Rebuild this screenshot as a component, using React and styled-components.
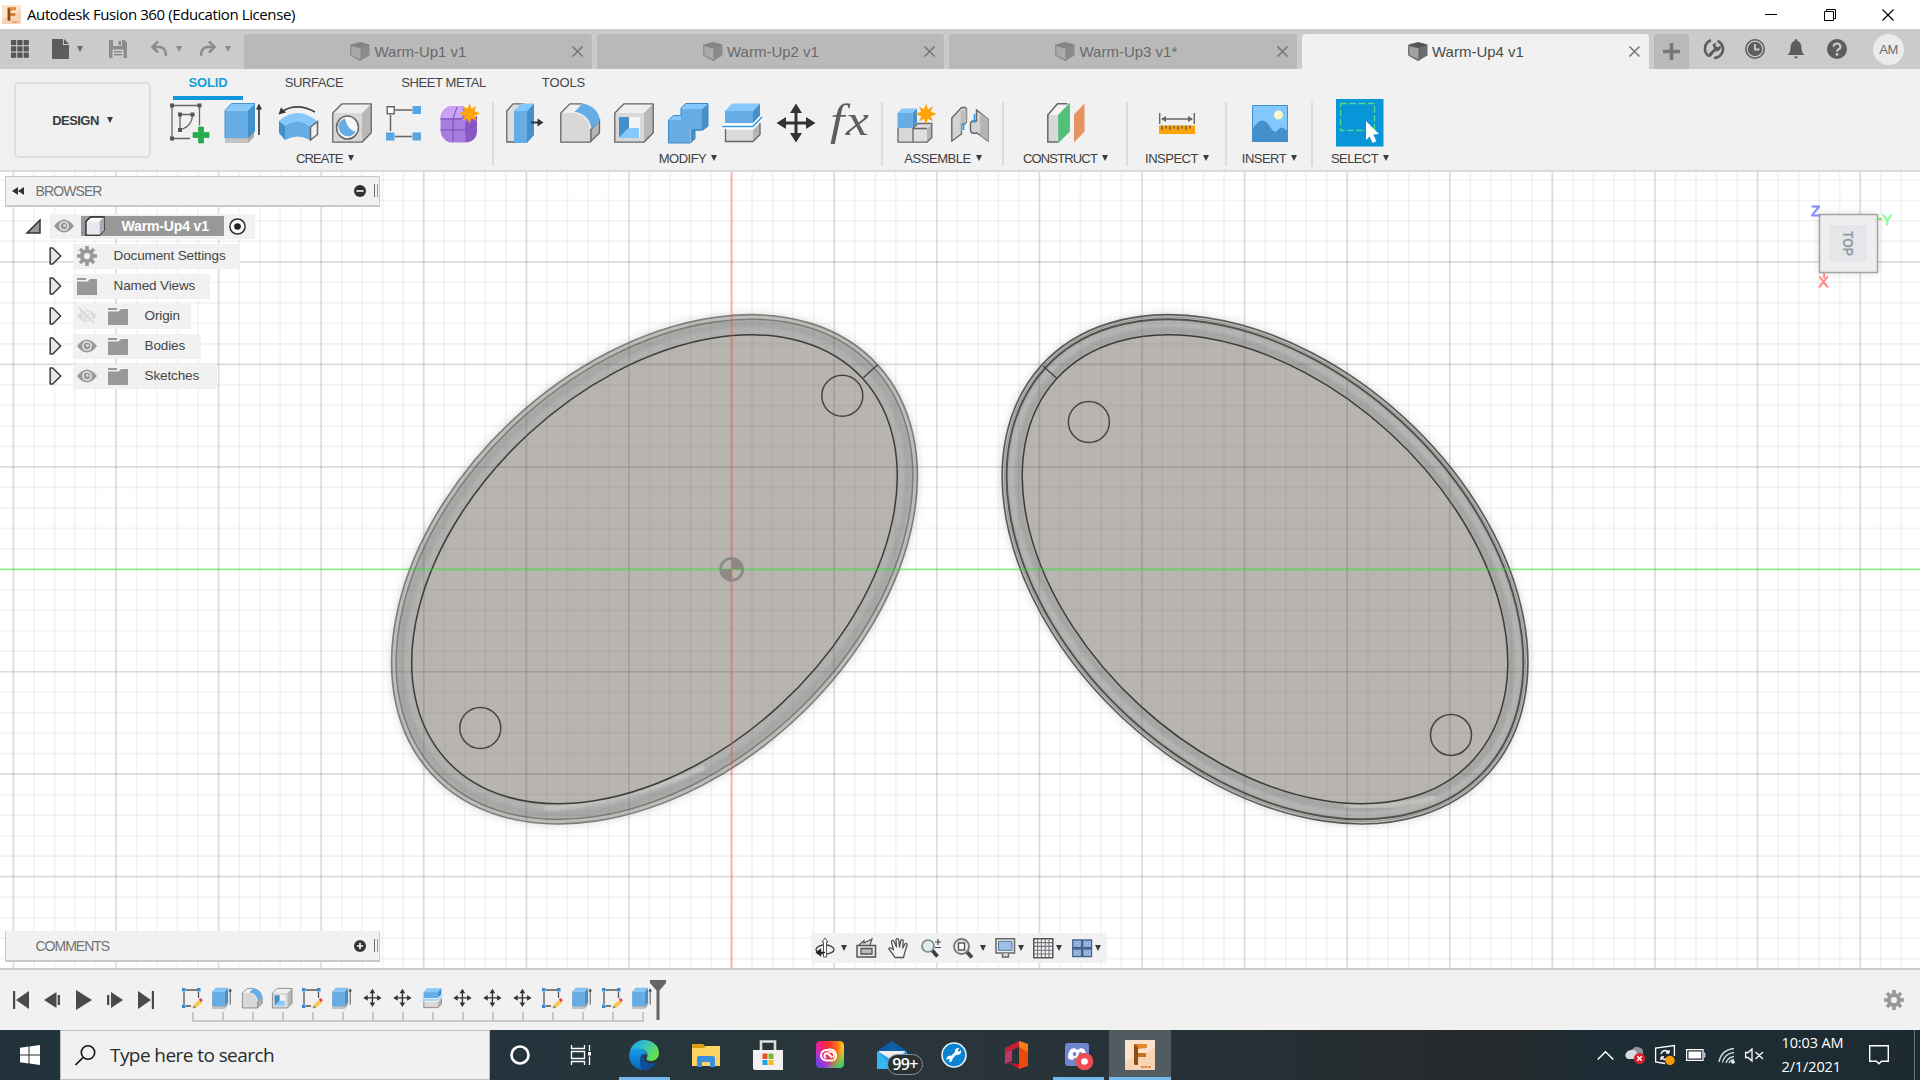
import React from 'react';
import styled, { createGlobalStyle } from 'styled-components';

const Global = createGlobalStyle`
  * { box-sizing: border-box; }
  html, body { margin: 0; padding: 0; overflow: hidden; }
  body { font-family: "Liberation Sans", Arial, sans-serif; color: #3c3c3c; }
  svg { display: block; flex: none; overflow: visible; }
`;

const SEGOE = '"Open Sans", "Noto Sans", sans-serif';

const Window = styled.div`
  width: 1920px; height: 1080px; display: flex; flex-direction: column; overflow: hidden; background: #fff;
`;
const Caret = styled.i`
  width: 0; height: 0; flex: none;
  border-left: 3.5px solid transparent; border-right: 3.5px solid transparent;
  border-top: 6px solid ${p => p.$color || '#3c3c3c'};
  margin-left: ${p => p.$gap || 0}px;
`;

/* ---------- title bar ---------- */
const TitleBar = styled.header`
  height: 29px; flex: none; display: flex; align-items: center; padding: 0 26px 0 2px; background: #fff;
`;
const TitleText = styled.span`
  font: 15px ${SEGOE}; letter-spacing: -0.4px; color: #000; margin: 0 0 2px 6px; flex: 1; white-space: nowrap;
`;
const WindowButtons = styled.div`display: flex; gap: 46.5px; align-items: center;`;

/* ---------- tab strip ---------- */
const Strip = styled.nav`
  height: 40px; flex: none; display: flex; background: #cbcbcb; align-items: flex-end;
`;
const QuickTools = styled.div`
  width: 244px; height: 40px; display: flex; align-items: center; padding: 0 0 0 11px;
`;
const QuickItem = styled.div`
  display: flex; align-items: center; width: ${p => p.$w}px;
`;
const Tab = styled.div`
  width: 347.5px; height: 35px; margin-right: 5px; border-radius: 4px 4px 0 0; display: flex; align-items: center;
  padding: 0 9px 0 106px; background: ${p => (p.$active ? '#f1f1f1' : '#b9b9b9')};
  color: ${p => (p.$active ? '#4a4a4a' : '#6a6a6a')};
`;
const TabLabel = styled.span`font-size: 15px; margin-left: 4.5px; flex: 1; white-space: nowrap;`;
const AddTab = styled.div`
  width: 35px; height: 35px; background: #bababa; border-radius: 4px 4px 0 0; display: grid; place-items: center;
`;
const StripTools = styled.div`
  display: flex; height: 40px; align-items: center; padding-left: 15px; gap: 21px;
`;
const Avatar = styled.div`
  width: 31px; height: 31px; border-radius: 50%; background: #ebebeb; display: grid; place-items: center;
  font-size: 13px; letter-spacing: -0.5px; color: #6b6b6b; margin-left: 5px;
`;

/* ---------- ribbon ---------- */
const Ribbon = styled.section`
  height: 103px; flex: none; display: flex; background: #f1f1f1; border-bottom: 2px solid #dadada;
`;
const DesignButton = styled.button`
  width: 137px; height: 76px; margin: 13px 5px 0 14px; border: 2px solid #dedede; border-radius: 5px; background: #f1f1f1;
  font: bold 13px "Liberation Sans", Arial, sans-serif; letter-spacing: -0.55px; color: #3c3c3c; padding: 0;
  display: flex; align-items: center; justify-content: center;
`;
const RibbonBody = styled.div`display: flex; flex-direction: column;`;
const RibbonTabs = styled.div`display: flex; height: 31px; padding-left: 17px;`;
const RibbonTab = styled.div`
  width: ${p => p.$w}px; margin-right: ${p => p.$gap}px; text-align: center; font-size: 13px; line-height: 28px;
  letter-spacing: ${p => p.$ls}px; white-space: nowrap;
  font-weight: ${p => (p.$on ? 'bold' : 'normal')};
  color: ${p => (p.$on ? '#189cdc' : '#474747')};
  border-bottom: 4px solid ${p => (p.$on ? '#0f97d9' : 'transparent')};
`;
const Groups = styled.div`display: flex; height: 70px;`;
const Group = styled.div`
  width: ${p => p.$w}px; display: flex; flex-direction: column; align-items: center;
  background: ${p => (p.$last ? 'none' : 'linear-gradient(#dcdcdc, #dcdcdc) right 2px / 2px 64px no-repeat')};
`;
const GroupIcons = styled.div`
  height: 48px; display: flex; align-items: center; gap: 14px; margin-top: -1px;
`;
const GroupLabel = styled.div`
  display: flex; align-items: center; font-size: 13px; letter-spacing: ${p => p.$ls}px; height: 24px; color: #404040; white-space: nowrap;
`;

/* ---------- viewport ---------- */
const Viewport = styled.main`
  position: relative; height: 796px; flex: none; overflow: hidden; background: #fff;
`;
const Scene = styled.svg`position: absolute; inset: 0;`;
const Overlay = styled.div`
  position: relative; height: 100%; display: flex; flex-direction: column; justify-content: space-between;
`;
const BrowserPanel = styled.aside`width: 375px; margin: 4px 0 0 5px;`;
const PanelBar = styled.div`
  width: 375px; height: 31px; background: #f1f1f1; display: flex; align-items: center; padding: 0 1px 1px 5.5px;
  border: 1px solid #c9c9c9; border-bottom-width: 2px; ${p => p.$flat && 'border-top-color: #f1f1f1;'}
  font-size: 14px; letter-spacing: ${p => p.$ls}px; color: #717171;
`;
const PanelTitle = styled.span`flex: 1; margin-left: ${p => p.$x}px;`;
const Grip = styled.i`width: 4px; height: 13px; margin-left: 8.5px; border-left: 1px solid #6b6b6b; border-right: 1px solid #9a9a9a;`;
const Tree = styled.div`display: flex; flex-direction: column; margin-top: 6.5px; gap: 5px;`;
const TreeRow = styled.div`display: flex; height: 25px; align-items: center; padding-left: ${p => p.$x}px;`;
const TreeItem = styled.div`
  height: 25px; width: ${p => p.$w}px; background: #f1f1f1; display: flex; align-items: center; gap: 11px; padding-left: 3.5px;
  margin-left: ${p => p.$x}px;
`;
const TreeLabel = styled.span`font-size: 13.5px; letter-spacing: -0.12px; margin: 0 0 1px 6px; color: #454545; white-space: nowrap;`;
const RootName = styled.div`
  width: 143px; height: 20px; background: #989898; color: #fff; font-weight: bold; font-size: 14px; letter-spacing: -0.15px;
  display: flex; align-items: center; gap: 17px; padding-left: 4px; margin: 0 -6px 0 -4px; white-space: nowrap;
`;
const BottomRow = styled.div`display: flex; align-items: flex-start; padding-left: 5px; height: 37px;`;
const NavBar = styled.div`
  margin: 2px 0 0 431px; width: 296px; height: 30px; background: #f1f1f1; display: flex; align-items: center; padding-left: 4px;
`;
const NavItem = styled.div`display: flex; align-items: center; width: ${p => p.$w}px;`;

/* ---------- timeline ---------- */
const Timeline = styled.section`
  height: 62px; flex: none; background: #f1f1f1; border-top: 2px solid #cbcbcb; display: flex; align-items: center; padding: 0 16px 0 13px;
`;
const Playback = styled.div`display: flex; gap: 15.3px; width: 169px;`;
const Features = styled.div`display: flex; height: 60px; width: 468px; align-items: flex-start;`;
const Feature = styled.div`
  width: 30px; flex: none; padding-top: 18px; display: flex; flex-direction: column; gap: 3px;
`;
const Tick = styled.i`
  display: block; height: 10px; width: ${p => (p.$last ? 2 : 30)}px; margin-left: 10px;
  border-left: 2px solid #c8c8c8; ${p => !p.$last && 'border-bottom: 2px solid #c8c8c8;'}
`;
const Push = styled.div`flex: 1;`;

/* ---------- taskbar ---------- */
const Taskbar = styled.footer`
  height: 50px; flex: none; display: flex; background: linear-gradient(90deg, #22323b 0%, #24343c 26%, #2a363b 45%, #263238 60%, #25292c 78%, #1e2d35 83%, #1d2a32 100%);
`;
const Slot = styled.div`
  width: ${p => p.$w || 62}px; height: 50px; display: grid; place-items: center;
  background: ${p => (p.$current ? '#525b60' : 'transparent')};
  box-shadow: ${p => (p.$current ? 'inset 0 -3px #76b9ed' : 'none')};
`;
const Running = styled(Slot)`
  background: linear-gradient(#76b9ed, #76b9ed) center bottom / 51px 3px no-repeat;
`;
const Search = styled.div`
  width: 430px; height: 50px; background: #f1f1f1; border: 1px solid #b9bdbf; display: flex; align-items: center; padding-left: 14px; gap: 14px;
  font: 19px ${SEGOE}; letter-spacing: -0.57px; color: #2b2b2b;
`;
const MailBox = styled.div`position: relative; width: 30px; height: 30px;`;
const Badge = styled.span`
  position: absolute; left: 10px; top: 14px; width: 36px; height: 21px; border-radius: 11px; border: 1px solid #8b9498; background: #2a3135;
  color: #fff; font: 600 16px/18px ${SEGOE}; letter-spacing: -0.6px; text-align: center;
`;
const Tray = styled.div`display: flex; align-items: center; height: 50px; margin-left: auto;`;
const TrayItem = styled.div`width: ${p => p.$w}px; height: 50px; display: flex; align-items: center;`;
const Clock = styled.div`
  width: 87px; font: 14.5px/24px ${SEGOE}; letter-spacing: -0.12px; color: #fff; white-space: nowrap; padding-bottom: 1px;
`;
const DesktopEdge = styled.i`width: 6px; height: 50px; border-left: 1px solid #6c757a;`;

/* ---------- drawings ---------- */
const D = '#666';
const Svg = ({ w = 40, h, vb, children }) => (
  <svg width={w} height={h || w} viewBox={vb || `0 0 ${w} ${h || w}`} fill="none">{children}</svg>
);

const FusionLogo = ({ s = 30 }) => (
  <Svg w={s} vb="0 0 30 30">
    <path d="M0 0h30v30H0z" fill="#fbe3cd" /><path d="M0 22L30 8v22H0z" fill="#f5caa4" opacity=".6" />
    <path d="M9 4h13v4H13v5h8v4h-8v8H9z" fill="#c9701c" /><path d="M9 4l4 4v17l-4-1z" fill="#8e4a10" /><path d="M12 4h10v4l-9 1z" fill="#e08a2c" />
    <path d="M16 27h10" stroke="#dd8640" strokeWidth="2" strokeDasharray="2.6 .9" />
  </Svg>
);
const TabCube = ({ on }) => (
  <Svg w={20} h={19}>
    <path d="M10 0l9.5 2.5v11L10 19 .5 13.5v-11z" fill={on ? '#6b6b6b' : '#8b8b8b'} />
    <path d="M.8 3.5L11 6v12.5L.8 13.2z" fill={on ? '#a2a2a2' : '#a9a9a9'} stroke={on ? '#5e5e5e' : '#888'} strokeWidth="1" />
    <path d="M.8 3L10 .5l9.200 2.100L11 6z" fill={on ? '#555' : '#848484'} />
  </Svg>
);
const Cross = ({ s = 11, c = '#777', sw = 1.6 }) => <Svg w={s}><path d={`M.5.5l${s - 1} ${s - 1}M${s - 0.5}.5l-${s - 1} ${s - 1}`} stroke={c} strokeWidth={sw} /></Svg>;

const SolidFront = () => (
  <g strokeLinejoin="round">
    <path d="M.8 10L10 .8h29L30 10z" fill="#efefef" /><path d="M30 10L39.2.8v29L30 39.2z" fill="#b8b8b8" />
    <path d="M.8 10H30v29.2H.8z" fill="#d8d8d8" /><path d="M.8 10L10 .8h29.200v29L30 39.200H.8z" stroke={D} strokeWidth="1.3" />
  </g>
);
const BlueExtrude = () => (
  <>
    <path d="M1 34h23l6-5v5l-6 6H1z" fill="#a9a9a9" /><path d="M1 35.5h23V40H1z" fill="#c4c4c4" />
    <path d="M1 7.5h23V35H1z" fill="#65ade4" /><path d="M1 7.5L7.5.5H31l-7 7z" fill="#86c8fb" /><path d="M24 7.5l7-7v28L24 35z" fill="#4390cb" />
    <path d="M1 35V7.5L7.5.5H31" stroke="#4d94ca" strokeWidth="1" />
    <path d="M35 32V4" stroke="#333" strokeWidth="1.6" /><path d="M32 6.5L35 .5l3 6z" fill="#333" />
  </>
);
const Star = ({ x, y }) => (
  <path transform={`translate(${x} ${y})`} fill="#fca40a" d="M0-10.5L2-4.8 7-7.5 4.8-2.4 10.5 0 4.8 2.4 7 7.5 2 4.8 0 10.5-2 4.8-7 7.5-4.8 2.4-10.500 0-4.800-2.400-7-7.500-2-4.800z" />
);
const MoveArt = () => (
  <path fill="#333" d="M20 .5l6 9.500h-4.500v8.500H30V14l9.500 6L30 26v-4.500h-8.500V30H26l-6 9.500L14 30h4.500v-8.500H10V26L.5 20 10 14v4.500h8.500V10H14z" />
);
const SplitArt = () => (
  <>
    <path d="M3 27h28v12H3z" fill="#dadada" /><path d="M31 27l7-7v12l-7 7z" fill="#b5b5b5" /><path d="M3.500 26v12.500H31l7-7V20" stroke={D} strokeWidth="1.3" />
    <path d="M3 8h28v12H3z" fill="#65ade4" /><path d="M3 8L10 .5h28L31 8z" fill="#86c8fb" /><path d="M31 8L38 .5V13l-7 7z" fill="#4390cb" />
    <path d="M0 23.500h31L40 14" stroke="#fff" strokeWidth="4.5" /><path d="M0 23.500h31L40 14" stroke="#2f9ae8" strokeWidth="1.6" />
  </>
);
const FilletArt = () => (
  <>
    <path d="M.8 10L10 .8h12L14 9z" fill="#efefef" /><path d="M30 26l9.500-8v12L30 39.500z" fill="#b5b5b5" />
    <path d="M.8 10h14c8 1 15 9 15.200 17v12.200H.8z" fill="#d8d8d8" />
    <path d="M22 .8H10L.8 10v29.200H30l9.500-9.200V17L31 26.500V39" stroke={D} strokeWidth="1.3" />
    <path d="M14.500 9L22.500.5C33 2 40 10 39.500 18L31.500 26C30 16 24 10 14.500 9z" fill="#65ade4" />
  </>
);
const ShellArt = () => (
  <>
    <SolidFront /><path d="M5 14h21v21H5z" fill="#f4f4f4" /><path d="M5 14h10v11L5 35z" fill="#4390cb" /><path d="M15 25h10v10H5z" fill="#86c8fb" />
  </>
);

const art = {
  sketch: (
    <>
      <path d="M2 2.500h27M2 2.500v33M2 35.500h18M29.500 2.500v20" stroke={D} strokeWidth="1.3" />
      <path d="M10 11.500h12M10 11.500v14M22.500 11.500Q22 24 10 26.500" stroke={D} strokeWidth="1.3" />
      <path d="M0 .5h4v4H0zM27.500.5h4v4h-4zM0 33.500h4v4H0zM8 9.500h4v4H8zM20.500 9.500h4v4h-4zM8 25h4v4H8z" fill="#555" />
      <path d="M28.500 24h5v5.500H39v5h-5.500V40h-5v-5.500H23v-5h5.500z" fill="#22b14c" stroke="#1c9b40" strokeWidth=".6" />
    </>
  ),
  extrude: <BlueExtrude />,
  revolve: (
    <>
      <path d="M4 8.500Q19-1 37 9" stroke="#444" strokeWidth="1.6" /><path d="M.5 11.500L3 4.500l5 5z" fill="#333" />
      <path d="M1 18Q19 2 39 18L33 25Q18 13 7 24z" fill="#86c8fb" /><path d="M1 18l6 5v14l-6-7z" fill="#4390cb" />
      <path d="M7 23Q20 14 32 24v13Q20 30 7 37z" fill="#65ade4" /><path d="M32.500 24l7-5.500v13l-7 5.500z" fill="#f1f1f1" stroke={D} strokeWidth="1.5" />
    </>
  ),
  hole: (
    <>
      <SolidFront /><ellipse cx="15.5" cy="24.5" rx="11" ry="11.5" fill="#f6f6f6" stroke={D} strokeWidth="1.5" />
      <path d="M13 15.500Q16 28 24 28.500A9.500 10 0 0 1 6.500 22Q8 17 13 15.500z" fill="#65ade4" />
    </>
  ),
  pattern: (
    <>
      <path d="M9 7h17M4.500 12v16M9 33.500h17" stroke={D} strokeWidth="1.5" /><path d="M1.200 3.700h7v7h-7z" fill="#fff" stroke={D} strokeWidth="1.4" />
      <path d="M26.500 3h8.500v8h-8.500zM0 29.500h8.500v8H0zM26.500 29.500h8.500v8h-8.500z" fill="#5aa6e0" />
    </>
  ),
  form: (
    <>
      <path d="M10 3h13l14 14v12q-1 9-11 10.500H10Q1 37 .5 27V14Q2 6 10 3z" fill="#a97de0" /><path d="M10 3h13v12H1Q3 6 10 3z" fill="#c9a3f5" />
      <path d="M26 18l11-5v16q-1 9-10 10.500z" fill="#8a57c7" />
      <path d="M.5 16h21l6-6M13 39V16l4-12M.5 27H25l12-6M26 39V20" stroke="#7c4bb8" strokeWidth="1" /><Star x={29.500} y={10.500} />
    </>
  ),
  press: (
    <>
      <path d="M.8 8L7 .8h10L9 8v31H.8z" fill="#ddd" stroke={D} strokeWidth="1.3" /><path d="M8 8h13v32H8z" fill="#65ade4" /><path d="M8 8L15 .5h13L21 8z" fill="#86c8fb" />
      <path d="M21 8L28 .5v31.500L21 40z" fill="#4390cb" /><path d="M25 19.500h9" stroke="#333" strokeWidth="2" /><path d="M31.500 15.500l6 4-6 4z" fill="#333" />
    </>
  ),
  fillet: <FilletArt />,
  shell: <ShellArt />,
  combine: (
    <>
      <path d="M.5 17h12.500V4h21v22H22v14H.5z" fill="#65ade4" /><path d="M.5 17l5-4.500H13V17zM13 5L17.500.5H40L34 6H13z" fill="#86c8fb" />
      <path d="M34 6L40 .5V23l-5 4-8 1V36l-4.500 4V26H34z" fill="#4390cb" />
      <path d="M.5 40V17l5-4.500H13V5L17.500.5H40V23l-5 4h-8v8.500L22.500 40z" stroke="#3f88c2" strokeWidth="1" />
    </>
  ),
  split: <SplitArt />,
  move: <MoveArt />,
  component: (
    <>
      <path d="M1 25h15v14H1z" fill="#d8d8d8" /><path d="M16 25l5-4h13l-4 5v13H16z" fill="#dedede" /><path d="M30 26l4.500-5v13L30 39z" fill="#b5b5b5" />
      <path d="M1 25v14.200h29l4.800-4.700V20.500H21L16 25v14M16.500 25.500H30" stroke={D} strokeWidth="1.3" />
      <path d="M.5 10h15v15H.5z" fill="#65ade4" /><path d="M.5 10L5 5.500h15L15.500 10z" fill="#86c8fb" /><path d="M15.500 10L20 5.500V20l-4.500 5z" fill="#4390cb" /><Star x={29} y={11} />
    </>
  ),
  joint: (
    <>
      <path d="M.8 14L10 4q4-2 5.500 1v12q-1 4-5 3v10L.8 37z" fill="#d4d4d4" stroke={D} strokeWidth="1.4" /><path d="M9.500 7v14l1 9V20q4 0 5-3V5z" fill="#bdbdbd" />
      <path d="M37 37l-11-8q-7 1-6.500-3v-7q1-3 6-2V6l11.500 9z" fill="#d4d4d4" stroke={D} strokeWidth="1.4" /><path d="M29 9l8 6v22l-8-6z" fill="#b5b5b5" />
      <path d="M12.500 19v7M23.500 10v9" stroke="#2f9ae8" strokeWidth="1.8" />
    </>
  ),
  construct: (
    <>
      <path d="M.8 12h10v27H.8z" fill="#d8d8d8" /><path d="M.8 12L10.500.8h10L11 12z" fill="#f4f4f4" /><path d="M11 39H.8V12L10.500.8h10" stroke={D} strokeWidth="1.5" />
      <path d="M11.500 12L22.500.5v28l-11 11z" fill="#53c079" stroke="#3fae66" strokeWidth=".6" /><path d="M27 11.500L37.500.5v28L27 39.500z" fill="#e5935f" />
    </>
  ),
  inspect: (
    <>
      <path d="M.7 10v11M35.300 10v11M3 16h30" stroke={D} strokeWidth="1.4" /><path d="M2 16l5-3v6zM34 16l-5-3v6z" fill={D} />
      <path d="M0 22.500h36v8.500H0z" fill="#fba305" /><path d="M3 22.500v4.500M7 22.500v3M11 22.500v4.500M15 22.500v3M19 22.500v4.500M23 22.500v3M27 22.500v4.500M31 22.500v3" stroke="#555" strokeWidth="1.2" />
    </>
  ),
  insert: (
    <>
      <path d="M.5 2.500h35v36H.5z" fill="#82c8fd" /><path d="M0 27Q5 18 10 17.500q5 0 10 9.500l4 2q3-4 5.500-4.500Q33 25 36 29v10H0z" fill="#4390cb" />
      <circle cx="26.5" cy="12" r="4.5" fill="#fbf7c8" /><path d="M.5 2.500h35v36H.5z" stroke="#4390cb" />
    </>
  ),
  select: (
    <>
      <path d="M0 0h47.500v47.500H0z" fill="#0896d9" /><path d="M4.500 4.500h34v27h-34z" stroke="#4fdc8a" strokeWidth="1.3" strokeDasharray="6.5 2.6" />
      <path d="M30 22l13 13-5.800.6 3.300 6.600-3.800 1.800-3.200-6.500L30 41z" fill="#fff" />
    </>
  ),
};
const Fx = styled.span`
  width: 40px; height: 44px; display: flex; align-items: center; justify-content: center; padding-bottom: 4px;
  font: italic 44px/40px "Liberation Serif", serif; color: #5e5e5e; letter-spacing: 1px; transform: scaleX(1.18);
`;

const groups = [
  { w: 337.5, name: 'CREATE', ls: -0.85, items: [['sketch'], ['extrude'], ['revolve'], ['hole'], ['pattern'], ['form']] },
  { w: 389, name: 'MODIFY', ls: -0.5, items: [['press'], ['fillet'], ['shell'], ['combine'], ['split'], ['move'], ['fx']] },
  { w: 121, name: 'ASSEMBLE', ls: -0.45, items: [['component'], ['joint', 38]] },
  { w: 124, name: 'CONSTRUCT', ls: -0.85, items: [['construct', 38, 40]] },
  { w: 99, name: 'INSPECT', ls: -0.5, items: [['inspect', 36, 40]] },
  { w: 86, name: 'INSERT', ls: -0.5, items: [['insert', 36, 40]] },
  { w: 95, name: 'SELECT', ls: -0.6, items: [['select', 47.5, 47.5]] },
];

const Folder = () => <Svg w={20} h={17}><path d="M0 0h9v2H0zM0 3.500h10.500L13 1h7v16H0z" fill="#999" /></Svg>;
const Eye = () => (
  <Svg w={20} h={14}><path d="M0 7Q10-6 20 7 10 20 0 7z" fill="#999" /><circle cx="10" cy="7" r="4.8" fill="#f1f1f1" /><circle cx="10" cy="7" r="3.4" fill="#999" /><circle cx="10.5" cy="6.5" r="1.3" fill="#e5e5e5" /></Svg>
);
const EyeOff = () => (
  <Svg w={20} h={16}><path d="M0 8Q10-4 20 8 10 20 0 8z" fill="#dadada" /><circle cx="10" cy="8" r="4" stroke="#f1f1f1" strokeWidth="1.3" /><path d="M2-.5L18 16" stroke="#f1f1f1" strokeWidth="4" /><path d="M2 0l15 15" stroke="#cfcfcf" strokeWidth="1.4" /></Svg>
);
const Gear = ({ s = 20 }) => (
  <Svg w={s} vb="0 0 20 20">
    {[0, 45, 90, 135].map(a => <path key={a} d="M8.200 0h3.600v20H8.200z" transform={`rotate(${a} 10 10)`} fill="#999" />)}
    <circle cx="10" cy="10" r="7" fill="#999" /><circle cx="10" cy="10" r="3.1" fill="#f1f1f1" />
  </Svg>
);
const Expand = () => <Svg w={13} h={18}><path d="M1.200 1h2.500l8 8-8 8H1.200z" fill="#e8e8e8" stroke="#3a3a3a" strokeWidth="1.5" strokeLinejoin="round" /></Svg>;
const Dot = ({ plus }) => <Svg w={12}><circle cx="6" cy="6" r="6" fill="#333" /><path d={plus ? 'M2.800 6h6.400M6 2.800v6.400' : 'M2.500 6h7'} stroke="#f1f1f1" strokeWidth="1.7" /></Svg>;

const rows = [
  { label: 'Document Settings', w: 167, icons: [Gear] },
  { label: 'Named Views', w: 137, icons: [Folder] },
  { label: 'Origin', w: 118, icons: [EyeOff, Folder] },
  { label: 'Bodies', w: 128, icons: [Eye, Folder] },
  { label: 'Sketches', w: 143.5, icons: [Eye, Folder] },
];

/* ---------- model ---------- */
const OX = 731.6, OY = 569.3, MINOR = 20.52;
function GridLines() {
  const v = [], h = [];
  for (let i = -36; i <= 58; i++) v.push(i);
  for (let i = -20; i <= 20; i++) h.push(i);
  const tone = i => (i % 5 === 0 ? 'rgba(70,70,70,.19)' : 'rgba(90,90,90,.072)');
  return (
    <g strokeWidth="1.7">
      {v.map(i => i !== 0 && <path key={`v${i}`} d={`M${OX + i * MINOR} 172V968`} stroke={tone(i)} />)}
      {h.map(i => i !== 0 && <path key={`h${i}`} d={`M0 ${OY + i * 20.49}H1920`} stroke={tone(i)} />)}
    </g>
  );
}
function Body({ cx, angle, strong, glow }) {
  const line = strong ? '#5a5a58' : '#7d7d7b';
  const ring = (a, b, props) => <ellipse rx={a} ry={b} {...props} />;
  return (
    <g transform={`translate(${cx} 569.3) rotate(${angle})`}>
      {ring(303.5, 206.5, { fill: '#999', filter: 'url(#soft)', opacity: 0.4 })}
      {ring(302.6, 205.8, { fill: '#bdbdb9', stroke: line, strokeWidth: 1.6 })}
      {strong && ring(300.2, 203.2, { stroke: '#969692', strokeWidth: 1 })}
      {ring(298, 201, { fill: '#acadaa', stroke: strong ? '#4b4b49' : '#7b7b78', strokeWidth: strong ? 2 : 1.6 })}
      {ring(292.5, 195.5, { stroke: strong ? '#b5b6b3' : '#a5a7a4', strokeWidth: 6, filter: 'url(#softer)' })}
      {ring(286.5, 189, { stroke: strong ? '#a5a6a4' : '#b1b2b0', strokeWidth: 6, filter: 'url(#softer)' })}
      <path d={glow} transform={`rotate(${-angle})`} stroke="#cbcbc8" strokeWidth="5" filter="url(#softer)" opacity=".8" />
      {ring(282.3, 184.9, { fill: '#b8b4af', stroke: '#3c3c3a', strokeWidth: 1.5 })}
    </g>
  );
}
function Model() {
  return (
    <Scene width="1920" height="796" viewBox="0 172 1920 796" fill="none">
      <defs>
        <filter id="soft"><feGaussianBlur stdDeviation="4" /></filter>
        <filter id="softer"><feGaussianBlur stdDeviation="1.5" /></filter>
      </defs>
      <Body cx={654.5} angle={-42.5} glow="M-110 239Q-40 236 50 198" />
      <Body cx={1265} angle={42.5} strong glow="M80 236Q120 240 170 228" />
      <g stroke="#454543" strokeWidth="1.5">
        <circle cx="842.3" cy="395.7" r="20.5" /><circle cx="480.3" cy="728" r="20.5" />
        <circle cx="1088.9" cy="422" r="20.5" /><circle cx="1451" cy="734.9" r="20.5" />
        <path d="M863.500 377.500l14-12.500M1043 366l13.500 12" />
      </g>
      <GridLines />
      <path d={`M${OX} 172V968`} stroke="rgba(255,60,60,.46)" strokeWidth="1.8" />
      <path d={`M0 ${OY}H1920`} stroke="rgba(40,225,40,.52)" strokeWidth="1.7" />
      <g opacity=".8">
        <circle cx={OX} cy={OY} r="11" stroke="#82807c" strokeWidth="2.6" />
        <path d={`M${OX} ${OY}v-11a11 11 0 0 1 11 11zM${OX} ${OY}v11a11 11 0 0 1-11-11z`} fill="#82807c" />
      </g>
      <g fontFamily="Liberation Sans, Arial, sans-serif" fontSize="15">
        <path d="M1819.500 214.500h58v58h-58z" fill="#888" filter="url(#soft)" opacity=".3" />
        <path d="M1819.500 214.500h58v58h-58z" fill="#eeeeee" stroke="#a4a4a4" strokeWidth="1.5" />
        <path d="M1829 225h38v37h-38z" fill="#e4e6ea" />
        <text x="1848" y="243.5" transform="rotate(90 1848 243.5)" textAnchor="middle" dy="5" fontSize="15" fontWeight="bold" fill="#969a9f" textLength="25" lengthAdjust="spacingAndGlyphs">TOP</text>
        <text x="1811" y="216" fill="#8a8aff" stroke="#8a8aff" strokeWidth=".8">Z</text>
        <text x="1882" y="224.5" fill="#8dfb8d" stroke="#8dfb8d" strokeWidth=".8">Y</text>
        <text x="1818.5" y="287" fill="#ff8a8a" stroke="#ff8a8a" strokeWidth=".8">X</text>
        <path d="M1878 219h4" stroke="#6fe86f" strokeWidth="2" /><path d="M1824 273v5" stroke="#ff8a8a" strokeWidth="2" />
      </g>
    </Scene>
  );
}

/* ---------- navigation icons ---------- */
const nav = [
  { w: 41, gap: 6, icon: <><ellipse cx="10" cy="11.5" rx="9" ry="4.5" stroke="#444" strokeWidth="1.4" /><path d="M8.500 19V4H7l3-4 3 4h-1.500v15z" fill="#fff" stroke="#555" /><path d="M2 14.500h8M1.500 14.500l4-3v6z" fill="#222" stroke="#222" strokeWidth="1.3" /></> },
  { w: 32, icon: <><path d="M3 7l5-4.500V5l8-4-2 6" fill="#ddd" stroke="#555" strokeWidth="1.2" /><path d="M1 7.500h18.500V19H1z" fill="#e7e9ec" stroke="#555" strokeWidth="1.5" /><path d="M5 10.500h11v5.500H5z" fill="#b8bcc2" stroke="#555" strokeWidth="1.3" /></> },
  { w: 33, icon: <path d="M7 19.500C5 16 2.500 13 .8 11c.5-2 2.500-1.500 4.700.8L3.500 4c0-2 2-2 2.600-.4L8.500 9 8 1.800C8.300.2 10.400.3 10.700 2L11.500 9l1.300-6.500c.7-1.500 2.500-1 2.400.6L14.700 10l2.200-4c1-1 2.500-.4 2.200 1l-2.600 8.500-1 4z" fill="#f4f4f4" stroke="#555" strokeWidth="1.3" strokeLinejoin="round" /> },
  { w: 32, icon: <><path d="M11 12l5.500 6.500" stroke="#3a3f45" strokeWidth="3.6" /><circle cx="7" cy="8" r="6" fill="#dcebea" stroke="#77858c" strokeWidth="1.7" /><path d="M14 4h6M17 1v6M14 9.500h6" stroke="#444" strokeWidth="1.2" /></> },
  { w: 42, gap: 6.5, icon: <><path d="M13 13l6 6.500" stroke="#444" strokeWidth="3.8" /><circle cx="8.5" cy="8.5" r="7.5" fill="#e3ecf0" stroke="#777" strokeWidth="1.8" /><path d="M5.500 5h6v7h-6z" fill="#fff" stroke="#555" strokeWidth="1.4" /></> },
  { w: 38, gap: 2.5, icon: <><path d="M1 .8h18.500V15H1z" fill="#eee" stroke="#666" strokeWidth="1.5" /><path d="M3.500 3.300h13.500v9H3.500z" fill="#9fc0e6" stroke="#5577a5" /><path d="M7.500 15.500v3.500h6v-3.500" fill="#ddd" stroke="#666" strokeWidth="1.4" /></> },
  { w: 39, gap: 2.5, icon: <><path d="M.8.8h19v19H.8z" fill="#f7f7f7" stroke="#555" strokeWidth="1.5" /><path d="M4.600 1v18M8.400 1v18M12.200 1v18M16 1v18M1 4.600h18M1 8.400h18M1 12.200h18M1 16h18" stroke="#70747c" strokeWidth="1.1" /></> },
  { w: 35, gap: 2.5, icon: <g fill="#a9c4ea" stroke="#41628f" strokeWidth="1.4"><path d="M.8 2h8.700v7.500H.8zM10.800 2h8.700v7.500h-8.700zM.8 11h8.700v7.500H.8zM10.800 11h8.700v7.500h-8.700z" /><path d="M3 4h4v3H3zM13 4h4v3h-4zM3 13h4v3H3zM13 13h4v3h-4z" strokeWidth=".8" stroke="#7394c2" /></g> },
];

/* ---------- timeline icons ---------- */
const feat = {
  s: <><path d="M4 2h11M2 4v12M16.500 4v6M4 18h5" stroke="#555" strokeWidth="1.3" /><path d="M0 0h3.500v3.500H0zM15 0h3.500v3.500H15zM0 16.500h3.500V20H0z" fill="#2f8de0" /><path d="M11 20l1-3.500 5-4.500 3 2.800-5.500 5z" fill="#f7c552" /><path d="M16.800 11.500l2-1.500 2 2.300-1.600 2z" fill="#e8413c" /><path d="M10.500 20.500l1-3 2.300 2z" fill="#888" /></>,
  e: <g transform="scale(.52)"><BlueExtrude /></g>,
  f: <g transform="scale(.51)"><FilletArt /></g>,
  h: <g transform="scale(.51)"><ShellArt /></g>,
  m: <g transform="translate(1 .5) scale(.47)"><MoveArt /></g>,
  p: <g transform="scale(.51)"><SplitArt /></g>,
};
const play = [
  'M0 1h2.200v18H0zM16 1v18L3 10z', 'M16 5v10h-2.300V5zM12.500 2v16L0 10z', 'M0 0l16 10L0 20z', 'M0 5h2.300v10H0zM4 2v16l12-8z', 'M13.800 1H16v18h-2.200zM0 1v18l13-9z',
];

export default function App() {
  return (
    <Window>
      <Global />
      <TitleBar>
        <FusionLogo s={19} />
        <TitleText>Autodesk Fusion 360 (Education License)</TitleText>
        <WindowButtons>
          <Svg w={12}><path d="M0 5.500h12" stroke="#000" /></Svg>
          <Svg w={12}><path d="M.5 2.500h9v9h-9zM2.500 2.500v-2h9v9h-2" stroke="#000" /></Svg>
          <Cross s={12} c="#000" sw={1.1} />
        </WindowButtons>
      </TitleBar>

      <Strip>
        <QuickTools>
          <QuickItem $w={41}><Svg w={18}>{[0, 6.3, 12.6].map(y => [0, 6.3, 12.6].map(x => <rect key={x + '-' + y} x={x} y={y} width="5.2" height="5.2" fill="#555" />))}</Svg></QuickItem>
          <QuickItem $w={57}><Svg w={17} h={20}><path d="M0 0h11v6h6v14H0z" fill="#5d5d5d" /><path d="M12 0l5 5h-5z" fill="#5d5d5d" /></Svg><Caret $gap={8} $color="#666" /></QuickItem>
          <QuickItem $w={42}><Svg w={18}><path d="M0 0h15.500L18 2.500V18H0z" fill="#8c8c8c" /><path d="M4 0h9v6H4z" fill="#cbcbcb" /><path d="M9.500 1H12v4H9.500z" fill="#8c8c8c" /><path d="M3.500 9.500h11V18h-11z" fill="#cbcbcb" /><path d="M5 11h8v1.500H5zM5 14h8v1.500H5z" fill="#8c8c8c" /></Svg></QuickItem>
          <QuickItem $w={49}><Svg w={16}><path d="M1 6h8q6 1 6 9M7 .5L1.500 6 7 11.500" stroke="#8c8c8c" strokeWidth="2.6" /></Svg><Caret $gap={8.5} $color="#8c8c8c" /></QuickItem>
          <QuickItem $w={40}><Svg w={16}><path d="M15 6H7Q1 7 1 15M9 .5L14.500 6 9 11.500" stroke="#8c8c8c" strokeWidth="2.6" /></Svg><Caret $gap={8.5} $color="#8c8c8c" /></QuickItem>
        </QuickTools>
        {['Warm-Up1 v1', 'Warm-Up2 v1', 'Warm-Up3 v1*', 'Warm-Up4 v1'].map((t, i) => (
          <Tab key={t} $active={i === 3}><TabCube on={i === 3} /><TabLabel>{t}</TabLabel><Cross /></Tab>
        ))}
        <AddTab><Svg w={17}><path d="M8.500 0v17M0 8.500h17" stroke="#777" strokeWidth="3.6" /></Svg></AddTab>
        <StripTools>
          <Svg w={20}><path d="M7 1.200A9 9 0 0 0 5 17.200M13.500 1.700A9 9 0 0 1 10 19" stroke="#5d5d5d" strokeWidth="2.6" /><path d="M5 14.500l5-5-1.500-4L12 3.500l-.5 3.200 2.300 1.500 3-1.700q.5 4-2.500 5.500-2 .7-3.300.2L7 17.500q-2 1-2.500-.5z" fill="#5d5d5d" /></Svg>
          <Svg w={20}><circle cx="10" cy="10" r="10" fill="#5d5d5d" /><circle cx="10" cy="10" r="7.8" stroke="#cbcbcb" strokeWidth="1.2" /><path d="M10 5v5.500h4.500" stroke="#cbcbcb" strokeWidth="1.8" /></Svg>
          <Svg w={20}><path d="M10 0q1.500 0 1.500 2Q15 3 15.500 8q0 6 3 8H1.500q3-2 3-8Q5 3 8.500 2 8.500 0 10 0zM8 17.500h4q-.3 2-2 2t-2-2z" fill="#5d5d5d" /></Svg>
          <Svg w={20}><circle cx="10" cy="10" r="10" fill="#5d5d5d" /><path d="M6.500 7.500Q7 4.500 10 4.500t3.500 3q0 1.700-1.800 2.700T10 12.800" stroke="#cbcbcb" strokeWidth="2.2" /><circle cx="10" cy="15.5" r="1.4" fill="#cbcbcb" /></Svg>
          <Avatar>AM</Avatar>
        </StripTools>
      </Strip>

      <Ribbon>
        <DesignButton>DESIGN<Caret $gap={8} /></DesignButton>
        <RibbonBody>
          <RibbonTabs>
            <RibbonTab $w={70} $gap={26} $ls={-0.1} $on>SOLID</RibbonTab>
            <RibbonTab $w={90} $gap={39.5} $ls={-0.45}>SURFACE</RibbonTab>
            <RibbonTab $w={90} $gap={30} $ls={-0.4}>SHEET METAL</RibbonTab>
            <RibbonTab $w={90} $gap={0} $ls={-0.1}>TOOLS</RibbonTab>
          </RibbonTabs>
          <Groups>
            {groups.map((g, i) => (
              <Group key={g.name} $w={g.w} $last={i === groups.length - 1}>
                <GroupIcons>
                  {g.items.map(([k, w = 40, h = w]) => (k === 'fx' ? <Fx key={k}>fx</Fx> : <Svg key={k} w={w} h={h}>{art[k]}</Svg>))}
                </GroupIcons>
                <GroupLabel $ls={g.ls}>{g.name}<Caret $gap={5} /></GroupLabel>
              </Group>
            ))}
          </Groups>
        </RibbonBody>
      </Ribbon>

      <Viewport>
        <Model />
        <Overlay>
          <BrowserPanel>
            <PanelBar $ls={-0.9}>
              <Svg w={12} h={8}><path d="M6 0v8L0 4zM12 0v8L6 4z" fill="#333" /></Svg>
              <PanelTitle $x={12}>BROWSER</PanelTitle><Dot /><Grip />
            </PanelBar>
            <Tree>
              <TreeRow $x={21}>
                <Svg w={15}><path d="M14 1v13H1z" fill="#999" stroke="#333" strokeWidth="1.5" /></Svg>
                <TreeItem $w={205} $x={9}>
                  <Eye />
                  <RootName>
                    <Svg w={20}><path d="M1 5.500L5.500 1h13.500v13.500L14.500 19H1z" fill="#f7f8fa" stroke="#222" strokeWidth="1.3" /><path d="M14.500 5.500L19 1v13.500L14.500 19z" fill="#a7abb3" /><path d="M2 6h12.500v12.500H2z" fill="#e6e9ee" /></Svg>
                    Warm-Up4 v1
                  </RootName>
                  <Svg w={17}><circle cx="8.5" cy="8.5" r="7.6" fill="#fafafa" stroke="#333" strokeWidth="1.5" /><circle cx="8.5" cy="8.5" r="3.3" fill="#222" /></Svg>
                </TreeItem>
              </TreeRow>
              {rows.map(r => (
                <TreeRow key={r.label} $x={44}>
                  <Expand />
                  <TreeItem $w={r.w} $x={11}>{r.icons.map((I, i) => <I key={i} />)}<TreeLabel>{r.label}</TreeLabel></TreeItem>
                </TreeRow>
              ))}
            </Tree>
          </BrowserPanel>
          <BottomRow>
            <PanelBar $flat $ls={-1}><PanelTitle $x={24}>COMMENTS</PanelTitle><Dot plus /><Grip /></PanelBar>
            <NavBar>
              {nav.map(({ w, gap, icon }, i) => (
                <NavItem key={i} $w={w}><Svg w={20}>{icon}</Svg>{gap && <Caret $gap={gap} />}</NavItem>
              ))}
            </NavBar>
          </BottomRow>
        </Overlay>
      </Viewport>

      <Timeline>
        <Playback>{play.map(d => <Svg key={d} w={16} h={20}><path d={d} fill="#4a4a4a" /></Svg>)}</Playback>
        <Features>
          {'s e f h s e m m p m m m s e s e'.split(' ').map((k, i) => (
            <Feature key={i}><Svg w={21}>{feat[k]}</Svg><Tick $last={i === 15} /></Feature>
          ))}
        </Features>
        <Svg w={16} h={40}><path d="M0 0h16v3l-6.500 7.500V40h-3V10.500L0 3z" fill="#666" /></Svg>
        <Push />
        <Gear />
      </Timeline>

      <Taskbar>
        <Slot $w={60}><Svg w={20}><path d="M0 2.800L8.500 1.500v8H0zM9.500 1.400L20 0v9.500H9.500zM0 10.500h8.500v8L0 17.200zM9.500 10.500H20V20L9.500 18.600z" fill="#fff" /></Svg></Slot>
        <Search><Svg w={21}><circle cx="13" cy="7.5" r="6.7" stroke="#111" strokeWidth="1.6" /><path d="M8 12.500L.5 20" stroke="#111" strokeWidth="1.7" /></Svg>Type here to search</Search>
        <Slot $w={60}><Svg w={20}><circle cx="10" cy="10" r="8.5" stroke="#fff" strokeWidth="2.6" /></Svg></Slot>
        <Slot $w={63}><Svg w={22} h={20}><path d="M.5 0v3.500h13V0M.5 20v-3.500h13V20M.5 6.500h13v7H.5zM18.500 0v6M18.500 11.500V20" stroke="#fff" strokeWidth="1.3" /><path d="M17 7h3v3.500h-3z" fill="#fff" /></Svg></Slot>
        <Running>
          <Svg w={30}>
            <defs>
              <linearGradient id="eg" x1="0" x2="1" y2=".5"><stop stopColor="#1b9de2" /><stop offset=".5" stopColor="#35c1c9" /><stop offset="1" stopColor="#66e04a" /></linearGradient>
              <linearGradient id="eb" y1="0" y2="1" x2="0"><stop stopColor="#1b9de2" /><stop offset="1" stopColor="#0b62c4" /></linearGradient>
            </defs>
            <path d="M.5 13C2 5 8 0 15 0c9 0 15 6 15 13 0 5-4 8-8 8-3 0-5-1-4.500-2.500C19.500 16 19 10 12 9 7 8.500 2 10.500.5 13z" fill="url(#eg)" />
            <path d="M0 15C1 9.500 6 7.500 11 8.500c5 1 7 4 7 7-1-2-7-1.500-7 4 0 5 5 8.500 10 8.500q-3 2-7 2C6 29.500 0 23 0 15z" fill="url(#eb)" />
            <path d="M11 19c0-3 2-5 4-5-2 6 3 11 12 9-3 5-8 7-13 7-3-3-3-7-3-11z" fill="#0e4e9d" />
          </Svg>
        </Running>
        <Slot><Svg w={28} h={24}><path d="M0 1h11l3 3v4H0z" fill="#dd9d10" /><path d="M0 5h12l2-2h14v20H0z" fill="#fcd462" /><path d="M5 15q0-2 2-2h14q2 0 2 2v9h-5v-5h-8v5H5z" fill="#3b8fe0" /></Svg></Slot>
        <Slot><Svg w={30}><path d="M8 11V1.500h14V11" stroke="#ddd" strokeWidth="2.6" /><path d="M0 10h30v20H2q-2 0-2-2z" fill="#f1f1f1" /><path d="M9.500 13.500h5V19h-5z" fill="#e8502a" /><path d="M15.500 13.500h5V19h-5z" fill="#7db72f" /><path d="M9.500 20h5v5h-5z" fill="#18a0ea" /><path d="M15.500 20h5v5h-5z" fill="#fbb914" /></Svg></Slot>
        <Slot>
          <Svg w={28}>
            <defs>
              <linearGradient id="ca" x2="1"><stop stopColor="#f01898" /><stop offset=".45" stopColor="#f5302c" /><stop offset=".75" stopColor="#f8701c" /><stop offset="1" stopColor="#f9d51c" /></linearGradient>
              <linearGradient id="cb" x1="0" y1="1" x2="1" y2="0"><stop stopColor="#3a50f0" /><stop offset=".25" stopColor="#a03ae0" stopOpacity=".85" /><stop offset=".5" stopColor="#c23ad0" stopOpacity="0" /></linearGradient>
              <linearGradient id="cc" x2="1" y2="1"><stop offset=".62" stopColor="#6ad04a" stopOpacity="0" /><stop offset=".9" stopColor="#3ad06a" /></linearGradient>
            </defs>
            <rect width="28" height="27" rx="4.5" fill="url(#ca)" /><rect width="28" height="27" rx="4.5" fill="url(#cb)" /><rect width="28" height="27" rx="4.5" fill="url(#cc)" />
            <path d="M17 19.500H10a5.200 5.200 0 1 1 2.200-10M16 16.500l-3-3q-2-2-4-.5-1.500 3 1.200 3.800M10.500 9.500a5.500 5.500 0 1 1 7 10" stroke="#fff" strokeWidth="2" />
            <path d="M12.500 11.500q3-2 5 .5 1.500 2.500-.5 4.500" stroke="#fff" strokeWidth="1.7" />
          </Svg>
        </Slot>
        <Slot>
          <MailBox>
            <Svg w={30}><path d="M0 11L15 1l15 10z" fill="#0f5ca8" /><path d="M2 11h26v10H2z" fill="#eee" /><path d="M0 11l15 9 15-9v18H0z" fill="#24a3e6" /><path d="M0 11l17 18H0z" fill="#38b6f2" /></Svg>
            <Badge>99+</Badge>
          </MailBox>
        </Slot>
        <Slot><Svg w={26}><circle cx="13" cy="13" r="12" fill="#0a84d0" stroke="#e8f2f8" strokeWidth="1.6" /><path d="M8.500 17.500l8.500-8.500" stroke="#fff" strokeWidth="3" /><path d="M14 10.500q-1-5 4.500-4.500L16.500 8.500l1.300 1.500L20 8q1 5-4.500 5zM11.500 15.500q.5 5-4 4.500l1.500-2-1-1.500L5.500 18q-.5-4 4-4.500z" fill="#fff" /></Svg></Slot>
        <Slot><Svg w={23} h={28}><path d="M0 7L14 0v6L7 9v11l-7 3z" fill="#c42036" /><path d="M14 0l9 3v22l-9 3z" fill="#e84a0c" /><path d="M14 0l9 3v8l-9-5z" fill="#f97c14" /><path d="M4 22l10 1v5z" fill="#c9152a" /><path d="M0 12l7-3v11l-7 3z" fill="#b83a6b" /></Svg></Slot>
        <Running>
          <Svg w={27} h={27}>
            <rect width="24" height="23" y="1" rx="3" fill="#7085cf" /><path d="M18 22h5v5z" fill="#7085cf" />
            <path d="M3 16q0-6 3-9l4-1 1 1.500h3L15 6l4 1q3 4 3 9-2 2-5 2l-1-2H9l-1 2q-3 0-5-2z" fill="#fff" /><circle cx="9.5" cy="12" r="1.9" fill="#7085cf" /><circle cx="15.5" cy="12" r="1.9" fill="#7085cf" />
            <circle cx="19.5" cy="19.5" r="8.8" fill="#ee4d54" /><circle cx="19.5" cy="19.5" r="3.3" fill="#fff" />
          </Svg>
        </Running>
        <Slot $current><FusionLogo /></Slot>
        <Tray>
          <TrayItem $w={28}><Svg w={17} h={9}><path d="M.7 8.500L8.500.7l7.800 7.800" stroke="#fff" strokeWidth="1.5" /></Svg></TrayItem>
          <TrayItem $w={30}><Svg w={20} h={18}><path d="M7 4Q10-1 14 1.500q5 .5 4 6.500H8z" fill="#8d9498" /><path d="M3 13q-4-2-2-6 2-3 5-3 4-1 6 3l3 5-2 1z" fill="#d8dcde" /><circle cx="14.5" cy="12.5" r="5.6" fill="#dc1f2e" /><path d="M12.300 10.300l4.400 4.400M16.700 10.300l-4.400 4.400" stroke="#fff" strokeWidth="1.5" /></Svg></TrayItem>
          <TrayItem $w={31}><Svg w={20}><path d="M10 18.500L.6 17V3L19.400.6V11" stroke="#fff" strokeWidth="1.3" /><path d="M6 9q1-3.500 4.500-3.500Q13 6 14 8V5M14 8h-3M13 12q-1 2.500-4 2.500-2-.5-3-2.500v3M6 12h3" stroke="#fff" strokeWidth="1.3" /><circle cx="15" cy="15.5" r="4.7" fill="#fd9a08" /></Svg></TrayItem>
          <TrayItem $w={31.5}><Svg w={20} h={12}><path d="M.6.600h16.400v10.800H.6z" stroke="#fff" strokeWidth="1.2" /><path d="M2.500 2.500h12.700v7H2.500z" fill="#fff" /><path d="M17.500 4h1.300v4h-1.300" stroke="#fff" /></Svg></TrayItem>
          <TrayItem $w={27}><Svg w={17}><path d="M1 15Q3 3 16 1.500M4.500 15.500Q6 7 16 5.500M8 16q1.500-5.500 8-6.500M11 16q1-3 5-3.500" stroke="#cfd4d7" strokeWidth="1.4" /><circle cx="15" cy="15" r="1.8" fill="#fff" /></Svg></TrayItem>
          <TrayItem $w={37}><Svg w={19} h={14}><path d="M.6 4.500h2.500L7 1v12L3.100 9.500H.6zM10.500 4l7.500 7M18 4l-7.500 7" stroke="#fff" strokeWidth="1.3" /></Svg></TrayItem>
          <Clock>10:03 AM<br />2/1/2021</Clock>
          <TrayItem $w={45.5}><Svg w={20}><path d="M.7.7h18.600v15.600H12.500L10 18.800 7.500 16.300H.7z" stroke="#fff" strokeWidth="1.4" /></Svg></TrayItem>
          <DesktopEdge />
        </Tray>
      </Taskbar>
    </Window>
  );
}
